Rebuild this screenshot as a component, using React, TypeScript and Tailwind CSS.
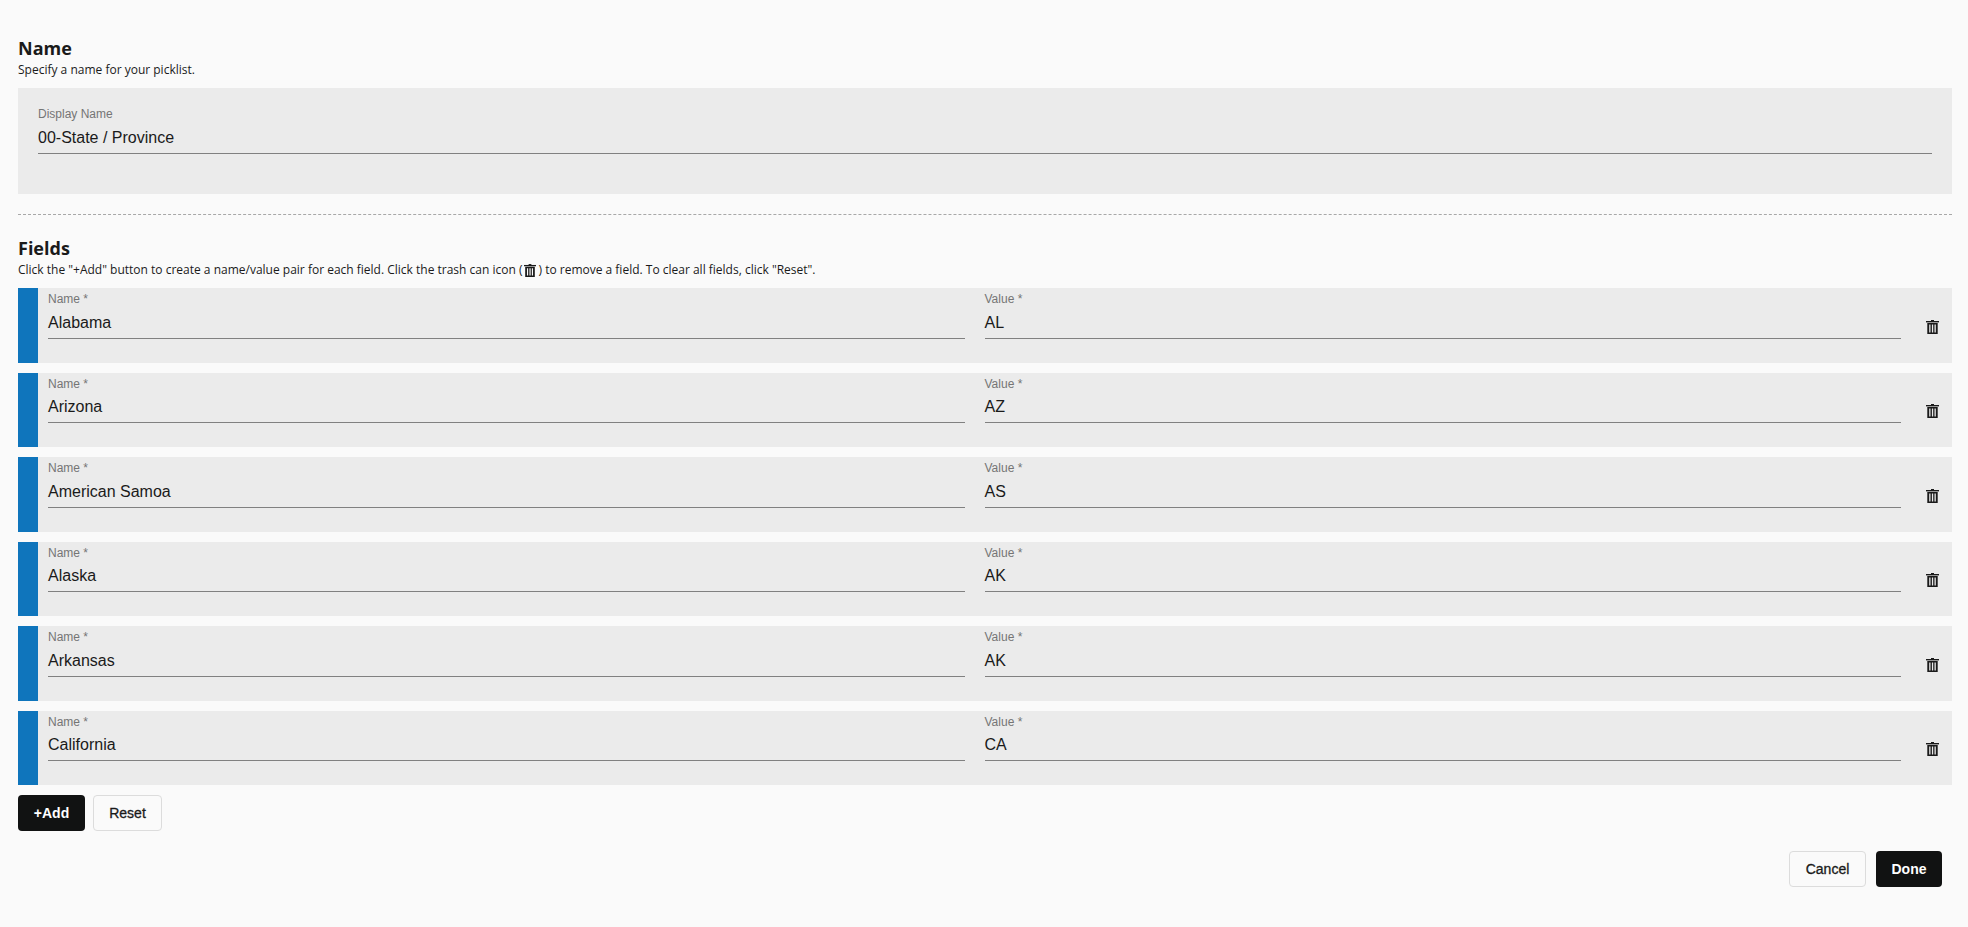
const rows = [
  { name: "Alabama", value: "AL" },
  { name: "Arizona", value: "AZ" },
  { name: "American Samoa", value: "AS" },
  { name: "Alaska", value: "AK" },
  { name: "Arkansas", value: "AK" },
  { name: "California", value: "CA" },
];

const TrashIcon = ({ className }: { className: string }) => (
  <svg className={className} viewBox="0 0 13 14" fill="none">
    <path d="M5 0h3v1H5z" fill="#1a1a1a" />
    <path d="M0 1h13v1.4H0z" fill="#1a1a1a" />
    <path
      fillRule="evenodd"
      clipRule="evenodd"
      d="M1.3 3h10.4v11H1.3zM3.2 4.6v7.8h1.3V4.6zM5.9 4.6v7.8h1.3V4.6zM8.5 4.6v7.8h1.3V4.6z"
      fill="#1a1a1a"
    />
  </svg>
);

const Field = ({ label, value }: { label: string; value: string }) => (
  <div className="flex-1 flex flex-col">
    <label className="text-xs leading-[16px] text-[#757575]">{label}</label>
    <div className="mt-[3.5px] pb-[3px] text-base leading-[24px] text-[#1a1a1a] border-b border-[#808080]">
      {value}
    </div>
  </div>
);

const App = () => {
  return (
    <div className="min-h-[927px] bg-[#fafafa] pl-[18px] pr-4 pt-[36px] font-['Liberation_Sans',Arial,sans-serif]">
      {/* Name */}
      <h2 className="text-lg leading-[24px] font-bold text-[#1a1a1a] font-['Open_Sans',sans-serif]">Name</h2>
      <p className="mt-[2px] text-xs leading-[16px] text-[#1a1a1a] font-['Open_Sans',sans-serif]">
        Specify a name for your picklist.
      </p>
      <div className="mt-[10px] h-[106px] bg-[#ebebeb] px-5 pt-[18px]">
        <Field label="Display Name" value="00-State / Province" />
      </div>
      <div className="mt-5 border-t border-dashed border-[#a8a8a8]" />

      {/* Fields */}
      <h2 className="mt-[21px] text-lg leading-[24px] font-bold text-[#1a1a1a] font-['Open_Sans',sans-serif]">Fields</h2>
      <p className="mt-[2px] flex items-center text-xs leading-[16px] text-[#1a1a1a] font-['Open_Sans',sans-serif]">
        Click the "+Add" button to create a name/value pair for each field. Click the trash can icon (
        <TrashIcon className="mx-[2px] w-[12px] h-[13px]" />
        ) to remove a field. To clear all fields, click "Reset".
      </p>
      <div className="mt-[10px] flex flex-col gap-[10px]">
        {rows.map((row) => (
          <div key={row.name} className="flex h-[74.5px] bg-[#ebebeb]">
            <div className="w-5 bg-[#0f75bc]" />
            <div className="flex-1 flex gap-5 pl-[10px] pt-[3px]">
              <Field label="Name *" value={row.name} />
              <Field label="Value *" value={row.value} />
            </div>
            <div className="w-[51px] flex items-center justify-end pr-[13px] pt-[3px]">
              <TrashIcon className="w-[13px] h-[14px]" />
            </div>
          </div>
        ))}
      </div>
      <div className="mt-[10px] flex gap-2">
        <button className="w-[67px] h-9 rounded bg-[#111212] text-sm font-bold text-white">+Add</button>
        <button className="w-[69px] h-9 rounded bg-[#fafafa] border border-[#dcdcdc] text-sm text-[#1a1a1a] [-webkit-text-stroke:0.3px_#1a1a1a]">
          Reset
        </button>
      </div>
      <div className="mt-5 flex justify-end gap-[10px] pr-[10px]">
        <button className="w-[77px] h-9 rounded bg-[#fafafa] border border-[#dcdcdc] text-sm text-[#1a1a1a] [-webkit-text-stroke:0.3px_#1a1a1a]">
          Cancel
        </button>
        <button className="w-[66px] h-9 rounded bg-[#111212] text-sm font-bold text-white">Done</button>
      </div>
    </div>
  );
};

export default App;
